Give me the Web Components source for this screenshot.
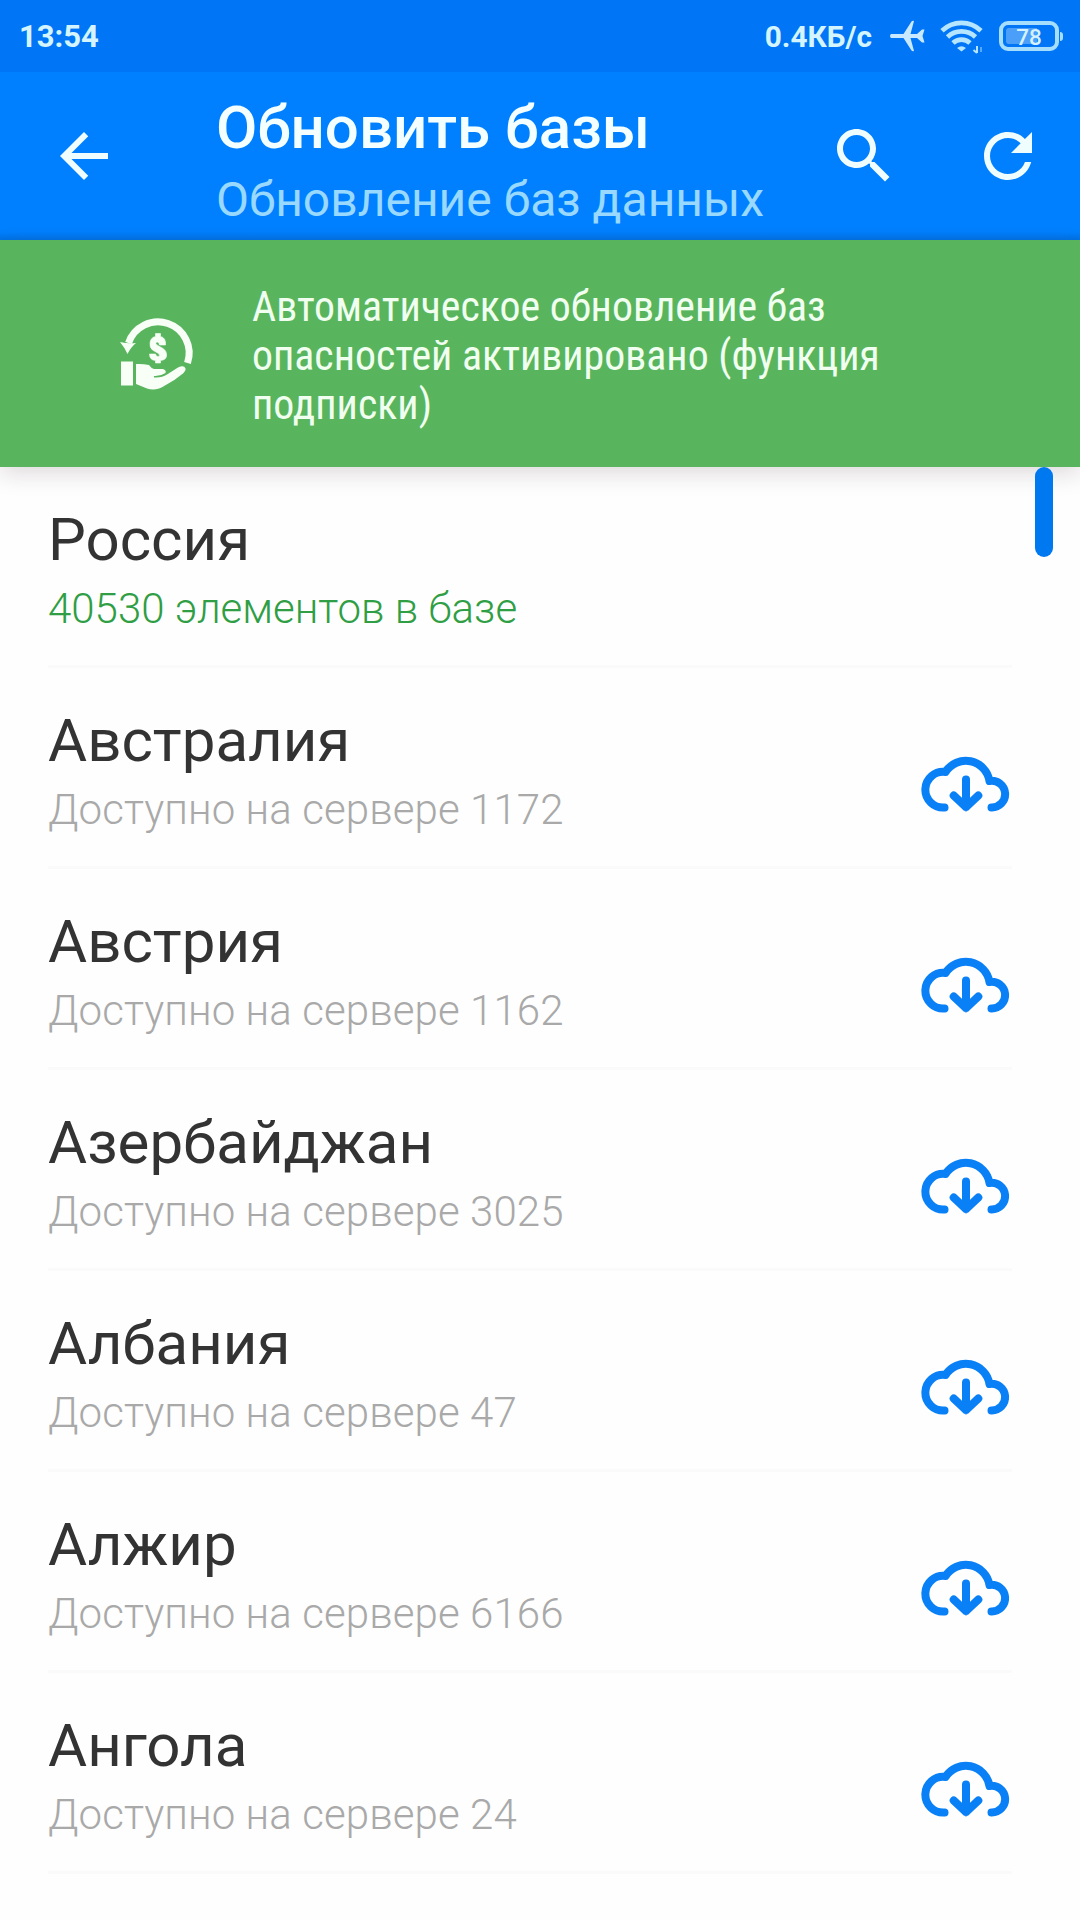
<!DOCTYPE html>
<html lang="ru">
<head>
<meta charset="utf-8">
<title>Обновить базы</title>
<style>
html,body{margin:0;height:100%;background:#fefefe;overflow:hidden}
body{font-family:Roboto,"Noto Sans",sans-serif}
</style>
</head>
<body>
<update-screen></update-screen>
<script>
const define = (name, html) => {
  const t = document.createElement('template');
  t.innerHTML = html;
  customElements.define(name, class extends HTMLElement {
    constructor() {
      super();
      this.attachShadow({mode: 'open'}).append(t.content.cloneNode(true));
    }
  });
};

define('status-bar', `
<style>
:host{display:flex;align-items:center;box-sizing:border-box;height:72px;padding:0 17px 0 19px;background:#0076f6;color:#d4f5ff;font-weight:700;font-size:29.8px;line-height:36px}
.clock{flex:1;font-size:31px;padding-top:2px}
svg{display:block;flex:none}
.speed{margin-right:17px;padding-top:2px}
.battery{display:flex;align-items:center;margin-left:15px}
.cell{box-sizing:border-box;width:60px;height:30px;border:4px solid #a6deff;border-radius:9px;padding:3px;display:flex}
.fill{flex:1;background:linear-gradient(90deg,#4b9ff8 68%,transparent 68%);border-radius:3px;font-weight:500;font-size:22.5px;line-height:18px;text-align:center;color:#d4f2ff}
.tip{width:3px;height:9px;background:#a6deff;margin-left:1px;border-radius:0 3px 3px 0}
</style>
<span class="clock">13:54</span>
<span class="speed">0.4КБ/с</span>
<svg width="36" height="32" viewBox="0 0 36 32" fill="#c8e8ff"><path d="M2 14H14.500L22.500 1.500Q23.500 0.500 25 1L21.500 14H28L33 9.500H35.500L33.500 16L35.500 22.500H33L28 18H21.500L25 31Q23.500 31.500 22.500 30.500L14.500 18H2Q0 16 2 14Z"/></svg>
<svg style="margin-left:15px" width="44" height="36" viewBox="0 0 44 36" fill="none" stroke="#b5e5ff" stroke-width="4.700"><path d="M2 12.700A28 28 0 0 1 41 12.700M7.500 19A20 20 0 0 1 35.500 19M13 25A12.500 12.500 0 0 1 30 25"/><path d="M17 30Q21.500 26.500 26 30L21.500 33.500Z" fill="#b5e5ff" stroke="none"/><path d="M37 35V28M37 35L33.500 32" stroke-width="2"/><path d="M41 29V34" stroke="#57a9f8" stroke-width="2"/></svg>
<div class="battery"><div class="cell"><div class="fill">78</div></div><div class="tip"></div></div>`);

define('app-bar', `
<style>
:host{display:flex;box-sizing:border-box;height:168px;padding:0 36px 0 48px;background:linear-gradient(#0080ff calc(100% - 8px),#0072e4);color:#f4ffff}
svg{display:block;flex:none;width:72px;height:72px;margin-top:48px;fill:#f0fdff}
.text{flex:1;margin-left:96px;padding-top:22px;white-space:nowrap}
.title{font-weight:500;font-size:60px;line-height:68px}
.sub{margin-top:10px;font-size:48px;line-height:56px;color:#99d9ff}
.refresh{margin-left:72px}
</style>
<svg viewBox="0 0 24 24"><path d="M20 11H7.830l5.590-5.590L12 4l-8 8 8 8 1.410-1.410L7.830 13H20v-2z"/></svg>
<div class="text"><div class="title"><slot></slot></div><div class="sub"><slot name="sub"></slot></div></div>
<svg viewBox="0 0 24 24"><path d="M15.500 14h-.79l-.28-.27C15.410 12.590 16 11.110 16 9.500 16 5.910 13.090 3 9.500 3S3 5.910 3 9.500 5.910 16 9.500 16c1.610 0 3.090-.59 4.230-1.570l.27.28v.79l5 4.990L20.490 19l-4.990-5zm-6 0C7.010 14 5 11.990 5 9.500S7.010 5 9.500 5 14 7.010 14 9.500 11.990 14 9.500 14z"/></svg>
<svg class="refresh" viewBox="0 0 24 24"><path d="M17.650 6.350C16.200 4.900 14.210 4 12 4c-4.420 0-7.990 3.580-7.990 8s3.570 8 7.990 8c3.730 0 6.840-2.550 7.730-6h-2.080c-.82 2.330-3.040 4-5.650 4-3.310 0-6-2.690-6-6s2.690-6 6-6c1.660 0 3.140.69 4.220 1.780L13 11h7V4l-2.350 2.350z"/></svg>`);

define('sub-banner', `
<style>
:host{display:flex;box-sizing:border-box;height:227px;background:#59b55d;color:#f0fff0;position:relative;box-shadow:0 6px 22px rgba(60,30,45,.17)}
svg{display:block;flex:none;width:120px;height:120px;margin:50px 32px 0 100px}
p{margin:42px 0 0;width:650px;font-family:"Roboto Condensed",Roboto,sans-serif;font-stretch:75%;font-size:41.850px;line-height:49px}
</style>
<svg viewBox="0 0 120 120" fill="#f7fff7">
<path d="M28.500 53A30.600 30.600 0 1 1 87.500 73" fill="none" stroke="#f7fff7" stroke-width="7"/>
<path d="M20 52Q28 54 36 53Q31 57 27.500 64Q25 58 20 52Z"/>
<path d="M21 71.500H33V95.500H21Z"/>
<path d="M36 74Q42 73.500 49 75Q51 78 54 79H63Q66.500 80 65.500 83Q60 86.500 54 86V87.500Q62 88 67 84.500L78 77.500Q84 74.500 85.500 78.500Q86 80.500 83 83.500Q74 91 65 95.500Q56 101.500 47 98.500L36 94Z"/>
<path d="M65.500 55H59.500Q59 51.500 57 52Q54.500 53 57 55L63 58.500Q67 61 66.500 66Q66 70 60.500 70.500V73H55.500V70.500Q49.500 70 49.500 64H55.500Q56 66.500 58 66.500Q61 66 58.500 63.500L52.500 60Q49.500 57.500 50 53Q50.500 47.500 55.500 46.500V43.500H60.500V46.500Q66 47.500 65.500 55Z" stroke="#f7fff7" stroke-width=".6"/>
</svg>
<p><slot></slot></p>`);

define('download-icon', `
<style>:host{display:block}svg{display:block}</style>
<svg width="90" height="60" viewBox="921 754 90 60" fill="none" stroke="#0a80f6" stroke-width="8" stroke-linecap="round" stroke-linejoin="round"><path d="M944.500 807.500A17.850 17.850 0 1 1 945.500 772A24 24 0 0 1 989.500 781A13.350 13.350 0 1 1 991.500 807.500M966 779.500V807M953.700 795.500L966 807.200L978.300 795.500"/></svg>`);

define('base-row', `
<style>
:host{display:flex;box-sizing:border-box;height:201px;margin:0 68px 0 48px;border-bottom:3px solid #fafafa;--sub:#a9a9a9;--track:.09px}
:host([active]){--sub:#2f9e44;--track:0}
.text{flex:1;padding-top:38px;white-space:nowrap}
.title{font-size:60px;line-height:70px;color:#333}
.sub{margin-top:9px;font-weight:300;font-size:42px;line-height:50px;letter-spacing:var(--track);color:var(--sub)}
download-icon{margin:86px 1px 0 0}
:host([active]) download-icon{display:none}
</style>
<div class="text"><div class="title"><slot></slot></div><div class="sub"><slot name="sub"></slot></div></div>
<download-icon></download-icon>`);

define('scroll-thumb', `
<style>:host{display:block;position:absolute;z-index:2;right:27px;top:0;width:18px;height:90px;border-radius:9px;background:#0078f0}</style>`);

define('update-screen', `
<style>
:host{display:flex;flex-direction:column;width:1080px;height:1920px;overflow:hidden;background:#fefefe}
status-bar,app-bar,sub-banner{flex:none}
sub-banner{z-index:1}
main{position:relative;flex:1;min-height:0;display:flex;flex-direction:column}
base-row{flex:none}
</style>
<status-bar></status-bar>
<app-bar>Обновить базы<span slot="sub">Обновление баз данных</span></app-bar>
<sub-banner>Автоматическое обновление баз опасностей активировано (функция подписки)</sub-banner>
<main>
<scroll-thumb></scroll-thumb>
<base-row active>Россия<span slot="sub">40530 элементов в базе</span></base-row>
<base-row>Австралия<span slot="sub">Доступно на сервере 1172</span></base-row>
<base-row>Австрия<span slot="sub">Доступно на сервере 1162</span></base-row>
<base-row>Азербайджан<span slot="sub">Доступно на сервере 3025</span></base-row>
<base-row>Албания<span slot="sub">Доступно на сервере 47</span></base-row>
<base-row>Алжир<span slot="sub">Доступно на сервере 6166</span></base-row>
<base-row>Ангола<span slot="sub">Доступно на сервере 24</span></base-row>
</main>`);
</script>
</body>
</html>
